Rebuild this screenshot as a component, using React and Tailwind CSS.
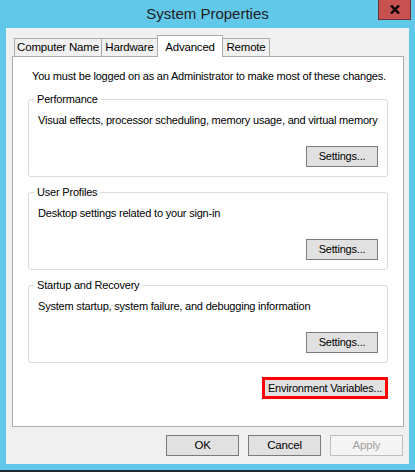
const Btn = ({ children, className = '' }) => (
  <div
    className={`flex h-[21px] items-center justify-center border bg-[#e1e1e1] ${className}`}
  >
    {children}
  </div>
);

const Group = ({ title, text }) => (
  <fieldset className="h-[85px] min-w-0 rounded-[3px] border border-[#dcdcdc] px-[9px]">
    <legend className="-ml-[4px] px-[3px] leading-[15px]">{title}</legend>
    <p className="mt-[6px] leading-[15px]">{text}</p>
    <div className="mt-[18px] flex justify-end">
      <Btn className="w-[72px] border-[#7a7a7a]">Settings...</Btn>
    </div>
  </fieldset>
);

const tabs = [
  { label: 'Computer Name', w: 'w-[88px]' },
  { label: 'Hardware', w: 'w-[57px]' },
  { label: 'Advanced', w: 'w-[66px]', active: true },
  { label: 'Remote', w: 'w-[48px]' },
];

export default function App() {
  return (
    <div className="flex h-[472px] w-[415px] flex-col whitespace-nowrap bg-[#62c8ea] font-['Liberation_Sans',sans-serif] text-[11px] tracking-[-0.2px] text-black">
      {/* title bar */}
      <div className="relative flex h-[28px] items-center justify-center text-[15px] tracking-normal text-[#1e1e1e]">
        System Properties
        <div className="absolute right-[4px] top-0 flex h-[20px] w-[33px] items-center justify-center border border-t-0 border-[#6b3434] bg-[#c75050]">
          <svg width="10" height="9" viewBox="0 0 10 9">
            <path d="M1 0.5 L9 8.5 M9 0.5 L1 8.5" stroke="#000" strokeWidth="2.4" />
          </svg>
        </div>
      </div>

      {/* client area */}
      <div className="mx-[6px] flex h-[436px] flex-col bg-[#f0f0f0]">
        <div className="mt-[7px] flex h-[21px] items-end pl-[8px] text-[11.5px]">
          {tabs.map((t, i) =>
            t.active ? (
              <div
                key={t.label}
                className={`relative z-10 -mb-px ${i ? '-ml-px' : ''} flex h-[22px] ${t.w} items-start justify-center border border-b-0 border-[#acacac] bg-white pt-[3px]`}
              >
                {t.label}
              </div>
            ) : (
              <div
                key={t.label}
                className={`${i ? '-ml-px' : ''} flex h-[18px] ${t.w} items-center justify-center border border-b-0 border-[#acacac] bg-[#f0f0f0] pt-px`}
              >
                {t.label}
              </div>
            )
          )}
        </div>

        <div className="ml-[6px] mr-[5px] flex h-[371px] flex-col border border-[#acacac] bg-white px-[15px]">
          <p className="mt-[12px] pl-[4px] leading-[15px]">
            You must be logged on as an Administrator to make most of these changes.
          </p>
          <div className="mt-[8px] flex flex-col gap-[8px]">
            <Group
              title="Performance"
              text="Visual effects, processor scheduling, memory usage, and virtual memory"
            />
            <Group title="User Profiles" text="Desktop settings related to your sign-in" />
            <Group
              title="Startup and Recovery"
              text="System startup, system failure, and debugging information"
            />
          </div>
          <div className="mt-[14px] flex justify-end">
            <div className="flex h-[22px] w-[126px] items-center justify-center border-[3px] border-[#ff0000] bg-[#e1e1e1]">
              Environment Variables...
            </div>
          </div>
        </div>

        <div className="mt-[8px] flex justify-end gap-[9px] pr-[6px] text-[11.5px]">
          <Btn className="w-[73px] border-[#7a7a7a]">OK</Btn>
          <Btn className="w-[73px] border-[#7a7a7a]">Cancel</Btn>
          <Btn className="w-[73px] border-[#bfbfbf] bg-[#f4f4f4] text-[#a0a0a0]">Apply</Btn>
        </div>
      </div>

      <div className="mt-auto h-[2px] bg-[#1d2a33]" />
    </div>
  );
}
